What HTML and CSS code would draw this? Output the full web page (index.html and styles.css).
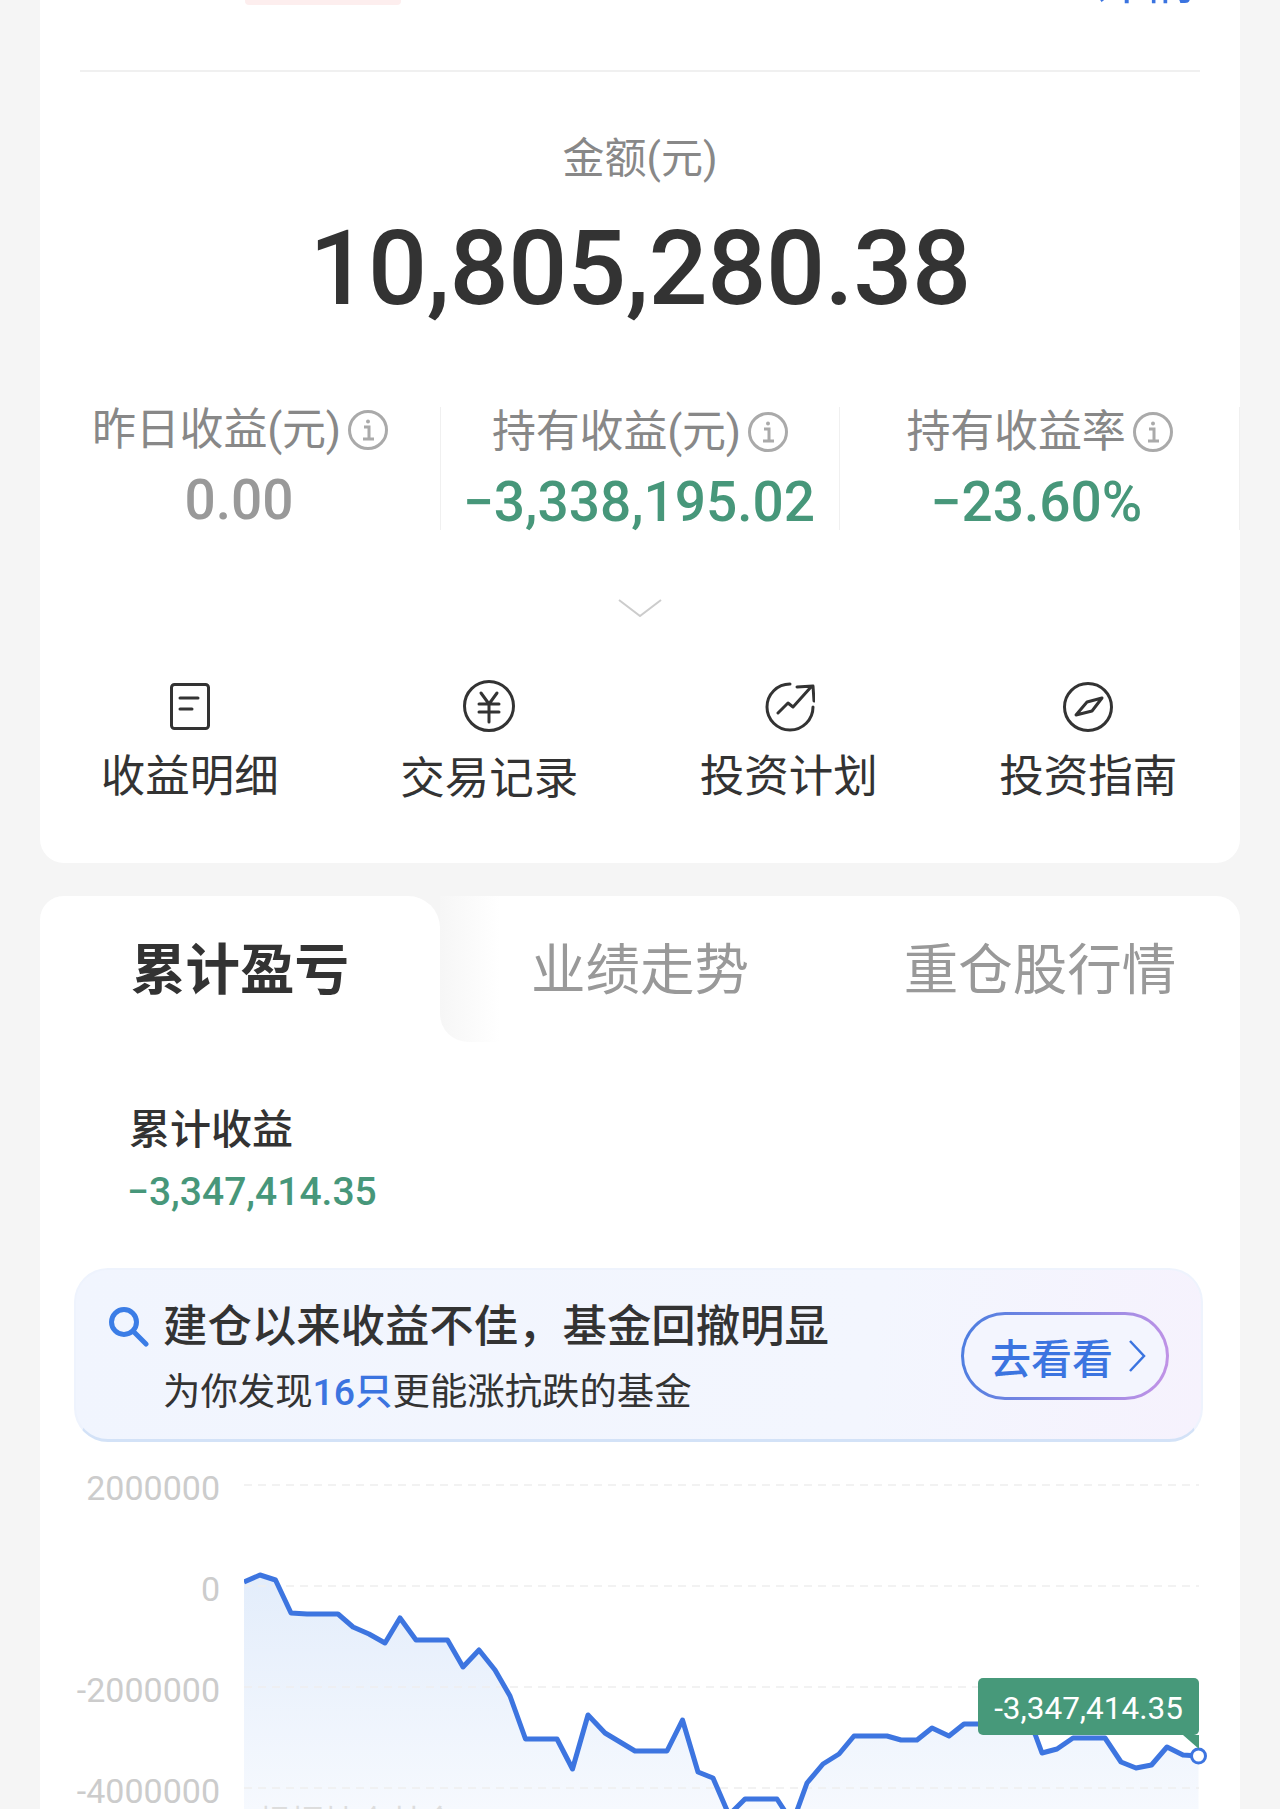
FILE: index.html
```html
<!DOCTYPE html>
<html lang="zh-CN">
<head>
  <meta charset="UTF-8">
  <meta name="viewport" content="width=device-width, initial-scale=1.0">
  <title>持仓详情</title>
  <link rel="stylesheet" href="styles.css">
</head>
<body>
<div class="card card-summary">
  <div class="card-head">
    <span class="head-badge"></span>
    <span class="head-link">详情</span>
  </div>
  <div class="amount-label">金额(元)</div>
  <div class="amount">10,805,280.38</div>

  <div class="stats">
    <div class="stat stat-first">
      <div class="stat-label">昨日收益(元)
        <svg class="info-icon" viewBox="0 0 40 40"><circle cx="20" cy="20" r="18.5"/><path d="M16 17h5v12M15 29h11"/><circle class="info-dot" cx="20" cy="11.5" r="2"/></svg>
      </div>
      <div class="stat-value stat-zero">0.00</div>
    </div>
    <div class="stat">
      <div class="stat-label">持有收益(元)
        <svg class="info-icon" viewBox="0 0 40 40"><circle cx="20" cy="20" r="18.5"/><path d="M16 17h5v12M15 29h11"/><circle class="info-dot" cx="20" cy="11.5" r="2"/></svg>
      </div>
      <div class="stat-value">−3,338,195.02</div>
    </div>
    <div class="stat stat-last">
      <div class="stat-label">持有收益率
        <svg class="info-icon" viewBox="0 0 40 40"><circle cx="20" cy="20" r="18.5"/><path d="M16 17h5v12M15 29h11"/><circle class="info-dot" cx="20" cy="11.5" r="2"/></svg>
      </div>
      <div class="stat-value">−23.60%</div>
    </div>
  </div>

  <svg class="expand-icon" viewBox="0 0 44 18"><path d="M1 1l21 16L43 1"/></svg>

  <div class="actions">
    <div class="action">
      <svg class="action-icon" viewBox="0 0 52 52"><rect x="7.5" y="4.5" width="37" height="44" rx="3"/><path d="M16 18h18M16 29h12"/></svg>
      <div class="action-label">收益明细</div>
    </div>
    <div class="action action-yen">
      <svg class="action-icon" viewBox="0 0 52 52"><circle cx="26" cy="26" r="24.5"/><path d="M18 13l8 11 8-11M16 24h20M16 32h20M26 24v18"/></svg>
      <div class="action-label">交易记录</div>
    </div>
    <div class="action">
      <svg class="action-icon" viewBox="0 0 52 52"><path d="M27 4A23 23 0 1 0 50 27M15 33l10-10 5 4L48 7M34 7l16-1 1 15"/></svg>
      <div class="action-label">投资计划</div>
    </div>
    <div class="action">
      <svg class="action-icon" viewBox="0 0 52 52"><circle cx="26" cy="27" r="23.5"/><path d="M14 35l11-13 15-4-10 13z"/></svg>
      <div class="action-label">投资指南</div>
    </div>
  </div>
</div>

<div class="card card-detail">
  <div class="tabs">
    <div class="tab tab-active">累计盈亏</div>
    <div class="tab tab-next">业绩走势</div>
    <div class="tab">重仓股行情</div>
  </div>

  <div class="profit-label">累计收益</div>
  <div class="profit-value">−3,347,414.35</div>

  <div class="banner">
    <div class="banner-text">
      <div class="banner-title">
        <svg class="search-icon" viewBox="0 0 40 40"><circle cx="15" cy="15" r="12.5"/><path d="M24 24l13 13"/></svg>
        建仓以来收益不佳，基金回撤明显
      </div>
      <div class="banner-sub">为你发现<span class="banner-count">16只</span>更能涨抗跌的基金</div>
    </div>
    <div class="banner-btn">去看看
      <svg class="btn-arrow" viewBox="0 0 20 34"><path d="M3 2l14 15L3 32"/></svg>
    </div>
  </div>

  <div class="chart">
    <div class="axis">
      <div class="axis-label">2000000</div>
      <div class="axis-label">0</div>
      <div class="axis-label">-2000000</div>
      <div class="axis-label">-4000000</div>
    </div>
    <svg class="plot" viewBox="244 1467 996 342">
      <defs>
        <linearGradient id="areaFill" gradientUnits="userSpaceOnUse" x1="0" y1="1575" x2="0" y2="1809">
          <stop offset="0" stop-color="#e3edfb"/>
          <stop offset="1" stop-color="#f6f9fe"/>
        </linearGradient>
      </defs>
      <polygon class="plot-area" points="244,1581 260,1574 275.5,1579 291,1612 307,1613 338,1613 353,1626 369,1633 385,1642 400,1617 416,1639 447.5,1639 463,1666 479,1649 495,1669 510,1695 525.5,1738 557,1738 572.5,1768 588,1714 605,1732 635,1750 667,1750 682.5,1719 698,1771 713,1777 729,1814 745,1798 777,1798 792.5,1822 807,1782 823,1763 839,1753 854,1735 887,1735 901,1739 917,1739 932,1727 949,1735 964,1723 1026,1723 1035,1733 1042,1752 1057,1748 1073,1737 1105,1737 1121,1761 1136,1767 1151.5,1764 1167,1746 1183,1754 1198.5,1755 1198.5,1830 244,1830"/>
      <path class="plot-grid" d="M244 1484H1199M244 1585H1199M244 1686H1199M244 1787H1199"/>
      <polyline class="plot-line" points="244,1581 260,1574 275.5,1579 291,1612 307,1613 338,1613 353,1626 369,1633 385,1642 400,1617 416,1639 447.5,1639 463,1666 479,1649 495,1669 510,1695 525.5,1738 557,1738 572.5,1768 588,1714 605,1732 635,1750 667,1750 682.5,1719 698,1771 713,1777 729,1814 745,1798 777,1798 792.5,1822 807,1782 823,1763 839,1753 854,1735 887,1735 901,1739 917,1739 932,1727 949,1735 964,1723 1026,1723 1035,1733 1042,1752 1057,1748 1073,1737 1105,1737 1121,1761 1136,1767 1151.5,1764 1167,1746 1183,1754 1198.5,1755"/>
      <circle class="plot-dot" cx="1198.5" cy="1755" r="7"/>
    </svg>
    <div class="chart-tip">-3,347,414.35</div>
    <div class="chart-note">根据持仓基金</div>
  </div>
</div>
</body>
</html>
```

FILE: styles.css
```css
body {
  font-family: Roboto, "Noto Sans CJK SC", sans-serif;
  margin: 0;
  height: 1809px;
  overflow: hidden;
  background: #f5f5f5;
  color: #333;
}
.card {
  margin: 0 40px;
  background: #fff;
}
.card-summary {
  padding-bottom: 54px;
  border-radius: 0 0 24px 24px;
}
.card-head {
  display: flex;
  justify-content: space-between;
  align-items: flex-end;
  height: 70px;
  margin: 0 40px;
  overflow: hidden;
  border-bottom: 2px solid #f0f0f0;
}
.head-badge {
  align-self: flex-start;
  width: 156px;
  height: 5px;
  margin-left: 165px;
  background: #fdeeee;
  border-radius: 0 0 4px 4px;
}
.head-link {
  align-self: flex-start;
  margin: -42px 4px 0 0;
  font-size: 52px;
  line-height: 48px;
  color: #3b74e0;
}
.amount-label {
  margin-top: 59px;
  text-align: center;
  font-size: 42px;
  line-height: 56px;
  color: #888;
}
.amount {
  margin-top: 22px;
  text-align: center;
  font-size: 104px;
  line-height: 120px;
  font-weight: 500;
  letter-spacing: -0.4px;
}
.stats {
  display: grid;
  grid-template-columns: repeat(3, 1fr);
  margin-top: 78px;
}
.stat {
  height: 123px;
  padding-top: 2px;
  box-sizing: border-box;
  border-right: 1px solid #f0f0f0;
  text-align: center;
}
.stat-first {
  padding-top: 0;
  border-right: none;
}
.stat:nth-child(2) {
  border-left: 1px solid #f0f0f0;
}
.stat-label {
  display: flex;
  justify-content: center;
  align-items: center;
  gap: 7px;
  font-size: 44px;
  line-height: 46px;
  letter-spacing: -0.2px;
  color: #888;
}
.info-icon {
  width: 40px;
  height: 40px;
  fill: none;
  stroke: #aaa;
  stroke-width: 3;
}
.info-dot {
  fill: #aaa;
  stroke: none;
}
.stat-value {
  margin-top: 17px;
  padding-right: 2px;
  font-size: 55px;
  line-height: 60px;
  font-weight: 500;
  color: #47977a;
}
.stat-last .stat-value {
  padding-right: 6px;
}
.stat-zero {
  color: #999;
}
.expand-icon {
  display: block;
  width: 44px;
  height: 18px;
  margin: 69px auto 0;
  fill: none;
  stroke: #ccc;
  stroke-width: 2;
}
.actions {
  display: grid;
  grid-template-columns: repeat(4, 1fr);
  margin: 63px 2px 0 0;
}
.action {
  text-align: center;
}
.action-icon {
  display: block;
  width: 52px;
  height: 52px;
  margin: 0 auto;
  fill: none;
  stroke: #333;
  stroke-width: 3;
  stroke-linecap: round;
  stroke-linejoin: round;
}
.action-label {
  margin-top: 15px;
  font-size: 44.5px;
  line-height: 60px;
}
.action-yen .action-label {
  margin-top: 17px;
}
.card-detail {
  margin-top: 33px;
  border-radius: 24px 24px 0 0;
}
.tabs {
  display: grid;
  grid-template-columns: repeat(3, 1fr);
  background: linear-gradient(#f5f5f5 30px, #fff 30px);
  border-radius: 24px 24px 0 0;
}
.tab {
  height: 146px;
  text-align: center;
  font-size: 54.5px;
  line-height: 149px;
  color: #999;
  background: #fff;
}
.tab:last-child {
  border-radius: 0 24px 0 0;
}
.tab-active {
  font-weight: 700;
  color: #333;
  border-radius: 24px 32px 0 0;
}
.tab-next {
  background: linear-gradient(90deg, #f6f6f6, #fff 60px);
  border-radius: 0 0 0 28px;
}
.profit-label {
  margin: 63px 0 0 89px;
  font-size: 41px;
  line-height: 50px;
  font-weight: 500;
}
.profit-value {
  margin: 15px 0 0 87px;
  font-size: 39px;
  line-height: 44px;
  font-weight: 500;
  color: #47977a;
}
.banner {
  display: flex;
  justify-content: space-between;
  align-items: center;
  height: 174px;
  box-sizing: border-box;
  margin: 54px 37px 0 34px;
  padding: 0 32px 0 33px;
  background: linear-gradient(100deg, #f1f5fe, #f3f6fe 70%, #f6f2fd);
  border: 2px solid #eef3fd;
  border-bottom: 3px solid #d3e2f7;
  border-radius: 34px;
}
.banner-title {
  display: flex;
  align-items: center;
  gap: 14px;
  margin-top: 6px;
  font-size: 44.4px;
  line-height: 56px;
  font-weight: 500;
}
.search-icon {
  width: 40px;
  height: 40px;
  fill: none;
  stroke: #3b7de6;
  stroke-width: 5;
  stroke-linecap: round;
}
.banner-sub {
  margin: 12px 0 0 54px;
  font-size: 37.4px;
  line-height: 50px;
}
.banner-count {
  color: #3b74e0;
  font-weight: 500;
}
.banner-btn {
  display: flex;
  align-items: center;
  gap: 14px;
  height: 88px;
  width: 208px;
  box-sizing: border-box;
  margin-top: 2px;
  padding-left: 26px;
  font-size: 41px;
  font-weight: 500;
  color: #3b74e0;
  border: 3px solid transparent;
  border-radius: 44px;
  background: linear-gradient(#f3f5fe, #f3f5fe) padding-box, linear-gradient(100deg, #4a7de0, #c493e6) border-box;
}
.btn-arrow {
  width: 20px;
  height: 34px;
  fill: none;
  stroke: #3b74e0;
  stroke-width: 2.5;
}
.chart {
  position: relative;
  display: flex;
  gap: 24px;
  height: 344px;
  margin-top: 26px;
  overflow: hidden;
}
.axis {
  display: flex;
  flex-direction: column;
  gap: 61px;
  width: 180px;
  text-align: right;
}
.axis-label {
  font-size: 34px;
  line-height: 40px;
  color: #ccc;
}
.plot {
  width: 996px;
  height: 342px;
  flex: none;
}
.plot-area {
  fill: url(#areaFill);
}
.plot-grid {
  fill: none;
  stroke: #eee;
  stroke-width: 1.5;
  stroke-dasharray: 8 6;
}
.plot-line {
  fill: none;
  stroke: #3d75e0;
  stroke-width: 5;
  stroke-linejoin: round;
}
.plot-dot {
  fill: #fff;
  stroke: #3d75e0;
  stroke-width: 3;
}
.chart-tip {
  position: absolute;
  left: 938px;
  top: 210px;
  width: 221px;
  height: 57px;
  border-radius: 5px;
  background: #47997a;
  color: #fff;
  text-align: center;
  font-size: 31.5px;
  line-height: 61px;
}
.chart-tip::after {
  content: "";
  position: absolute;
  right: 0;
  top: 57px;
  width: 16px;
  height: 14px;
  background: #47997a;
  clip-path: polygon(0 0, 100% 0, 100% 100%);
}
.chart-note {
  position: absolute;
  left: 218px;
  top: 335px;
  font-size: 33px;
  line-height: 40px;
  color: #ddd;
}
```
